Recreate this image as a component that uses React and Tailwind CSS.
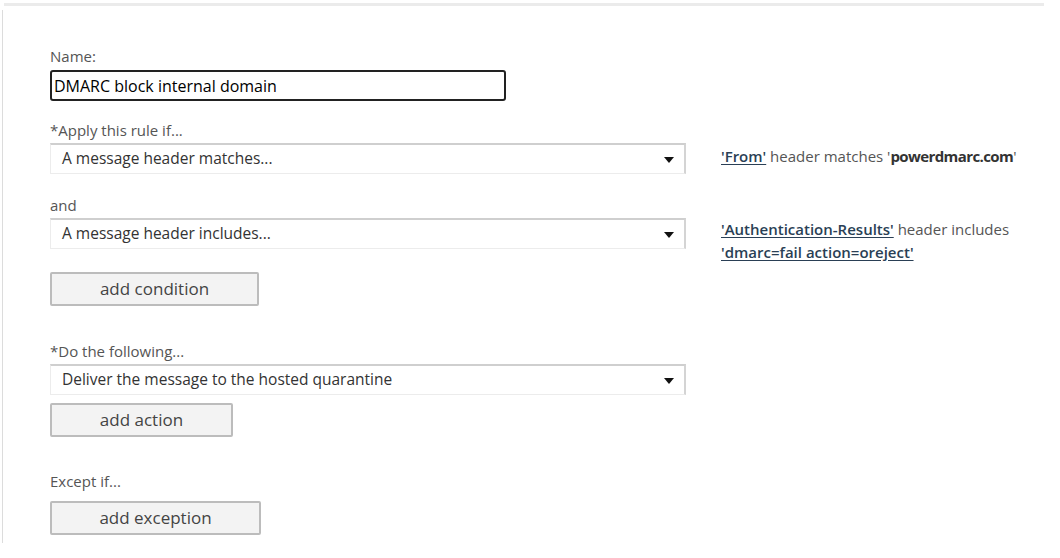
import { useState } from "react";

const font = { fontFamily: '"Open Sans", "Noto Sans", sans-serif' };

const Label = ({ children, className = "" }) => (
  <div className={`text-[15px] leading-[18px] text-[#555] ${className}`}>{children}</div>
);

const Select = ({ value }) => (
  <div className="flex shrink-0 items-center justify-between h-[31px] w-[636px] bg-white border border-[#ececec] border-t-[2px] border-t-[#cfcfcf] border-r-[2px] border-r-[#d4d4d4] pl-[11px] pr-[9px]">
    <span className="text-[15.5px] text-[#333]">{value}</span>
    <svg width="12" height="8" viewBox="0 0 12 8" className="mt-[2px]">
      <path d="M1 1h10L6 7z" fill="#111" />
    </svg>
  </div>
);

const Button = ({ children, w }) => (
  <button className={`${w} h-[34px] bg-[#f3f3f3] border-[2px] border-[#bcbcbc] rounded-[2px] text-[17px] text-[#444]`}>
    {children}
  </button>
);

const Link = ({ children }) => (
  <span className="text-[#2a3f55] font-semibold underline underline-offset-2">{children}</span>
);

export default function App() {
  const [name, setName] = useState("DMARC block internal domain");
  return (
    <div className="w-[1060px] h-[558px] bg-white overflow-hidden" style={font}>
      <div className="ml-[4px] mt-[3px] w-[1040px] h-[3px] bg-[#ebebeb]" />
      <div className="ml-[2px] mt-[4px] h-[533px] border-l border-[#dcdcdc] pl-[47px] pt-[37px]">
        <Label>Name:</Label>
        <input
          value={name}
          onChange={(e) => setName(e.target.value)}
          className="mt-[5px] block w-[456px] h-[31px] border-[2px] border-[#222] rounded-[3px] px-[2px] text-[16px] text-black outline-none"
          style={font}
        />

        <Label className="mt-[20px]">*Apply this rule if...</Label>
        <div className="mt-[4px] flex items-start h-[31px]">
          <Select value="A message header matches..." />
          <div className="ml-[35px] mt-[2px] whitespace-nowrap text-[15px] leading-[23px] text-[#555]">
            <Link>'From'</Link> header matches '
            <span className="font-bold text-[#333] tracking-[-0.6px]">powerdmarc.com</span>'
          </div>
        </div>

        <Label className="mt-[22px]">and</Label>
        <div className="mt-[4px] flex items-start h-[31px]">
          <Select value="A message header includes..." />
          <div className="ml-[35px] whitespace-nowrap text-[15px] leading-[23px] text-[#555]">
            <div>
              <Link>'Authentication-Results'</Link> header includes
            </div>
            <div>
              <Link>'dmarc=fail action=oreject'</Link>
            </div>
          </div>
        </div>

        <div className="mt-[23px]">
          <Button w="w-[209px]">add condition</Button>
        </div>

        <Label className="mt-[36px]">*Do the following...</Label>
        <div className="mt-[4px]">
          <Select value="Deliver the message to the hosted quarantine" />
        </div>
        <div className="mt-[8px]">
          <Button w="w-[183px]">add action</Button>
        </div>

        <Label className="mt-[35px]">Except if...</Label>
        <div className="mt-[11px]">
          <Button w="w-[211px]">add exception</Button>
        </div>
      </div>
    </div>
  );
}
